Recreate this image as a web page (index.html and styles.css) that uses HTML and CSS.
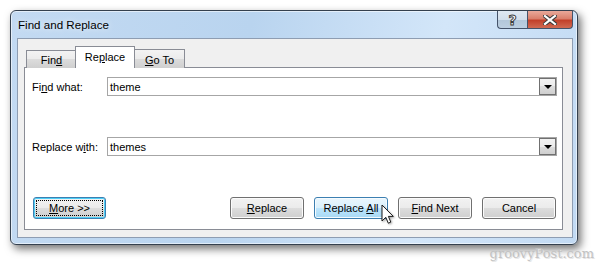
FILE: index.html
```html
<!DOCTYPE html>
<html lang="en">
<head>
<meta charset="UTF-8">
<meta name="viewport" content="width=device-width, initial-scale=1.0">
<title>Find and Replace</title>

<link rel="stylesheet" href="styles.css">

</head>
<body>

<div class="window">
    <!-- Aero title bar with the help and close buttons -->
    <div class="titlebar">
        <span class="title">Find and Replace</span>
        <div class="caption-buttons">
            <button class="cap help">?</button>
            <button class="cap close">
                <svg width="14" height="10" viewBox="0 0 14 10">
                    <path d="M2 1 L12 9 M12 1 L2 9" stroke="#3a3a3a" stroke-width="4.2" stroke-linecap="square"/>
                    <path d="M2 1 L12 9 M12 1 L2 9" stroke="#ffffff" stroke-width="2.2" stroke-linecap="square"/>
                </svg>
            </button>
        </div>
    </div>

    <div class="client">
        <div class="tabs">
            <div class="tab tab-find">Fin<u>d</u></div>
            <div class="tab tab-active">Re<u>p</u>lace</div>
            <div class="tab tab-goto"><u>G</u>o To</div>
        </div>

        <div class="panel">
            <div class="field">
                <label>Fi<u>n</u>d what:</label>
                <div class="combo">
                    <span class="combo-text">theme</span>
                    <span class="drop"><span class="arrow"></span></span>
                </div>
            </div>

            <div class="field">
                <label>Replace w<u>i</u>th:</label>
                <div class="combo">
                    <span class="combo-text">themes</span>
                    <span class="drop"><span class="arrow"></span></span>
                </div>
            </div>

            <div class="button-row">
                <button class="btn btn-focus"><span class="focus-ring"><u>M</u>ore &gt;&gt;</span></button>
                <div class="button-group">
                    <button class="btn"><u>R</u>eplace</button>
                    <button class="btn btn-hover">Replace <u>A</u>ll</button>
                    <button class="btn"><u>F</u>ind Next</button>
                    <button class="btn">Cancel</button>
                </div>
            </div>
        </div>
    </div>
</div>

<div class="credit">groovyPost.com</div>

<!-- Mouse pointer over "Replace All" -->
<svg class="cursor" width="14" height="21" viewBox="0 0 14 21">
    <path d="M1 1 L1 17 L4.8 13.3 L7.3 19.2 L9.8 18.1 L7.4 12.4 L12.3 12.4 Z" fill="#ffffff" stroke="#1a1a1a" stroke-width="1" stroke-linejoin="round"/>
</svg>

</body>
</html>
```

FILE: styles.css
```css
body {
    margin: 0;
    background-color: #ffffff;
    font-family: "Liberation Sans", Arial, sans-serif;
    font-size: 11px;
    color: #000000;
    position: relative;
    height: 264px;
    overflow: hidden;
}

u {
    text-decoration: underline;
    text-underline-offset: 1px;
}

/* Outer window frame */
.window {
    margin: 10px 0 0 10px;
    width: 568px;
    height: 235px;
    box-sizing: border-box;
    border: 1px solid #34404e;
    border-radius: 6px;
    padding: 0 4px 6px 6px;
    display: flex;
    flex-direction: column;
    background: linear-gradient(100deg, #c3daf2 0%, #b9d4ef 40%, #d3e6f9 72%, #c2daf3 100%);
    box-shadow: inset 0 0 0 1px rgba(255, 255, 255, 0.55), 3px 4px 9px rgba(0, 0, 0, 0.55);
}

.titlebar {
    height: 27px;
    display: flex;
    justify-content: space-between;
    align-items: flex-start;
    flex-shrink: 0;
}

.title {
    padding-left: 1px;
    line-height: 27px;
    font-size: 11.6px;
    color: #000000;
    text-shadow: 0 0 6px rgba(255, 255, 255, 0.9);
}

.caption-buttons {
    display: flex;
    margin-right: 0px;
}

.cap {
    height: 18px;
    padding: 0;
    border: 1px solid #44536a;
    border-top: none;
    display: flex;
    align-items: center;
    justify-content: center;
    cursor: pointer;
}

.help {
    width: 30px;
    border-right: none;
    border-radius: 0 0 0 4px;
    background: linear-gradient(#dfe8f2 0%, #d2dfec 50%, #b2c6d9 50%, #bccfe1 100%);
    font-family: "DejaVu Sans", sans-serif;
    font-weight: bold;
    font-size: 14px;
    color: #ffffff;
    -webkit-text-stroke: 1px #3f3f3f;
    padding-top: 1px;
}

.close {
    width: 46px;
    border-radius: 0 0 4px 0;
    background: linear-gradient(#e9a99a 0%, #d9806c 45%, #c2402a 55%, #d06a52 100%);
}

/* Dialog body */
.client {
    flex: 1;
    box-sizing: border-box;
    border: 1px solid #8e9db2;
    background-color: #f0f0f0;
    padding: 8px 9px 7px 6px;
    display: flex;
    flex-direction: column;
}

.tabs {
    display: flex;
    align-items: flex-end;
    height: 21px;
    padding-left: 2px;
    position: relative;
    z-index: 2;
    margin-bottom: -1px;
}

.tab {
    box-sizing: border-box;
    height: 18px;
    border: 1px solid #898c95;
    border-bottom: none;
    background: linear-gradient(#f3f3f3 0%, #ebebeb 50%, #dcdcdc 50%, #cfcfcf 100%);
    display: flex;
    align-items: center;
    justify-content: center;
    padding-top: 1px;
}

.tab-find {
    width: 51px;
}

.tab-active {
    width: 60px;
    height: 22px;
    margin-left: -2px;
    background: #ffffff;
    position: relative;
    z-index: 2;
    padding-bottom: 2px;
}

.tab-goto {
    width: 51px;
    margin-left: -1px;
    height: 19px;
}

/* White tab page */
.panel {
    flex: 1;
    box-sizing: border-box;
    border: 1px solid #898c95;
    background-color: #ffffff;
    padding: 9px 5px 9px 7px;
    display: flex;
    flex-direction: column;
    gap: 41px;
}

.field {
    display: flex;
    align-items: center;
    height: 19px;
}

.field label {
    width: 75px;
    flex-shrink: 0;
}

.combo {
    flex: 1;
    height: 19px;
    box-sizing: border-box;
    border: 1px solid #a6a6a6;
    display: flex;
    align-items: center;
    justify-content: space-between;
}

.combo-text {
    padding-left: 2px;
}

.drop {
    width: 17px;
    height: 17px;
    box-sizing: border-box;
    border: 1px solid #707070;
    background: linear-gradient(#f2f2f2 0%, #ebebeb 50%, #dddddd 50%, #cfcfcf 100%);
    display: flex;
    align-items: center;
    justify-content: center;
}

.arrow {
    width: 0;
    height: 0;
    border-left: 4px solid transparent;
    border-right: 4px solid transparent;
    border-top: 4px solid #000000;
    margin-top: 1px;
}

/* Buttons along the bottom */
.button-row {
    display: flex;
    justify-content: space-between;
    align-items: center;
    padding-left: 1px;
    padding-right: 1px;
}

.button-group {
    display: flex;
    gap: 10px;
}

.btn {
    width: 74px;
    height: 22px;
    box-sizing: border-box;
    padding: 0;
    border: 1px solid #707070;
    border-radius: 3px;
    background: linear-gradient(#f2f2f2 0%, #ebebeb 50%, #dddddd 50%, #cfcfcf 100%);
    box-shadow: inset 0 0 0 1px #fbfbfb;
    font-family: "Liberation Sans", Arial, sans-serif;
    font-size: 11px;
    color: #000000;
    cursor: pointer;
}

.btn-focus {
    width: 73px;
    border-color: #3c7fb1;
    box-shadow: inset 0 0 0 1px #4fcff7;
    padding: 2px;
    display: flex;
}

.focus-ring {
    flex: 1;
    border: 1px dotted #000000;
    display: flex;
    align-items: center;
    justify-content: center;
}

.btn-hover {
    border-color: #3c7fb1;
    background: linear-gradient(#eaf6fd 0%, #d9f0fc 50%, #bee6fd 50%, #a7d9f5 100%);
    box-shadow: inset 0 0 0 1px #f6fbfe;
}

/* Site watermark below the dialog */
.credit {
    text-align: right;
    padding-right: 4px;
    margin-top: 1px;
    font-family: "DejaVu Serif", serif;
    font-size: 13px;
    line-height: 16px;
    color: #c2c2c2;
    text-shadow: 1px 1px 0 #e4e4e4;
}

.cursor {
    position: absolute;
    left: 381px;
    top: 204px;
    filter: drop-shadow(1px 1px 1px rgba(0, 0, 0, 0.35));
}
```
